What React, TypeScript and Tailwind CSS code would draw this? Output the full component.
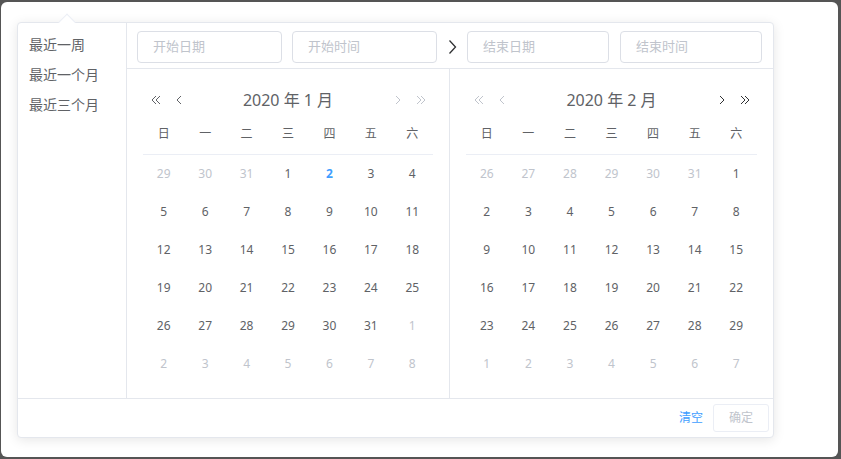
import React from "react";

type Day = { n: number; out?: boolean; today?: boolean };

const weeks = ["日", "一", "二", "三", "四", "五", "六"];

function buildMonth(prev: number[], count: number, todayN?: number): Day[][] {
  const days: Day[] = prev.map((n) => ({ n, out: true }));
  for (let i = 1; i <= count; i++) days.push({ n: i, today: i === todayN });
  let k = 1;
  while (days.length < 42) days.push({ n: k++, out: true });
  const rows: Day[][] = [];
  for (let r = 0; r < 6; r++) rows.push(days.slice(r * 7, r * 7 + 7));
  return rows;
}

const jan = buildMonth([29, 30, 31], 31, 2);
const feb = buildMonth([26, 27, 28, 29, 30, 31], 29);

function Chevron({ dir, double, color }: { dir: "left" | "right"; double?: boolean; color: string }) {
  const single = dir === "left" ? "M6 1 L2 5 L6 9" : "M2 1 L6 5 L2 9";
  const dbl =
    dir === "left"
      ? "M5 1 L1 5 L5 9 M9 1 L5 5 L9 9"
      : "M1 1 L5 5 L1 9 M5 1 L9 5 L5 9";
  return (
    <svg width={double ? 10 : 8} height="10" viewBox={double ? "0 0 10 10" : "0 0 8 10"} fill="none" stroke={color} strokeWidth="1">
      <path d={double ? dbl : single} />
    </svg>
  );
}

function Calendar({
  title,
  rows,
  leftOn,
  rightOn,
  border,
}: {
  title: string;
  rows: Day[][];
  leftOn: boolean;
  rightOn: boolean;
  border?: boolean;
}) {
  const on = "#303133";
  const off = "#c0c4cc";
  return (
    <div className={`w-1/2 px-[16px] pt-[17px] pb-[15px] ${border ? "border-r border-[#e4e7ed]" : ""}`}>
      <div className="relative flex h-[28px] items-center justify-center">
        <div className="absolute left-[8px] top-0 flex h-[28px] items-center gap-[14px]">
          <Chevron dir="left" double color={leftOn ? "#606266" : off} />
          <Chevron dir="left" color={leftOn ? "#606266" : off} />
        </div>
        <span className="text-[16px] text-[#606266]">{title}</span>
        <div className="absolute right-[7px] top-0 flex h-[28px] items-center gap-[14px]">
          <Chevron dir="right" color={rightOn ? on : off} />
          <Chevron dir="right" double color={rightOn ? on : off} />
        </div>
      </div>
      <div className="grid h-[41px] grid-cols-7 items-center border-b border-[#ebeef5] text-[12px] text-[#606266]">
        {weeks.map((w) => (
          <div key={w} className="text-center">
            {w}
          </div>
        ))}
      </div>
      {rows.map((r, i) => (
        <div key={i} className="grid h-[38px] grid-cols-7 items-center text-[12px]">
          {r.map((d, j) => (
            <div
              key={j}
              className={`text-center ${
                d.out ? "text-[#c0c4cc]" : d.today ? "font-bold text-[#409eff]" : "text-[#606266]"
              }`}
            >
              {d.n}
            </div>
          ))}
        </div>
      ))}
    </div>
  );
}

function Field({ text, w }: { text: string; w: string }) {
  return (
    <div className={`flex h-[32px] ${w} items-center rounded-[4px] border border-[#dcdfe6] pl-[15px] text-[13px] text-[#c0c4cc]`}>
      {text}
    </div>
  );
}

export default function App() {
  return (
    <div
      className="h-[459px] w-[841px] bg-[#555555] pt-[2px] pr-[3px] pb-[2px] pl-[1px]"
      style={{ fontFamily: '"Noto Sans", "Noto Sans CJK SC", sans-serif' }}
    >
      <div className="h-full rounded-[6px] bg-white pl-[16px] pt-[20px]">
        <div className="relative flex h-[416px] w-[757px] flex-col rounded-[4px] border border-[#e4e7ed] bg-white shadow-[0_2px_12px_0_rgba(0,0,0,0.1)]">
          <div className="absolute -top-[7px] left-[43px] h-[12px] w-[12px] rotate-45 border-l border-t border-[#ebeef5] bg-white" />
          <div className="flex flex-1">
            <div className="w-[110px] border-r border-[#e4e7ed] pt-[6px]">
              {["最近一周", "最近一个月", "最近三个月"].map((s) => (
                <div key={s} className="flex h-[30px] items-center pl-[11px] text-[14px] text-[#606266]">
                  {s}
                </div>
              ))}
            </div>
            <div className="flex flex-1 flex-col">
              <div className="flex h-[46px] items-center border-b border-[#e4e7ed] pt-[3px] pl-[10px] pr-[11px]">
                <div className="flex gap-[10px]">
                  <Field text="开始日期" w="w-[145px]" />
                  <Field text="开始时间" w="w-[145px]" />
                </div>
                <div className="flex w-[30px] justify-center">
                  <svg width="9" height="16" viewBox="0 0 9 16" fill="none" stroke="#303133" strokeWidth="1.3">
                    <path d="M1.5 1.5 L7.5 8 L1.5 14.5" />
                  </svg>
                </div>
                <div className="flex gap-[11px]">
                  <Field text="结束日期" w="w-[142px]" />
                  <Field text="结束时间" w="w-[142px]" />
                </div>
              </div>
              <div className="flex flex-1">
                <Calendar title="2020 年 1 月" rows={jan} leftOn rightOn={false} border />
                <Calendar title="2020 年 2 月" rows={feb} leftOn={false} rightOn />
              </div>
            </div>
          </div>
          <div className="flex h-[39px] items-center justify-end gap-[10px] border-t border-[#e4e7ed] pr-[4px]">
            <span className="text-[12px] text-[#409eff]">清空</span>
            <div className="flex h-[28px] w-[56px] items-center justify-center rounded-[3px] border border-[#ebeef5] text-[12px] text-[#c0c4cc]">
              确定
            </div>
          </div>
        </div>
      </div>
    </div>
  );
}
